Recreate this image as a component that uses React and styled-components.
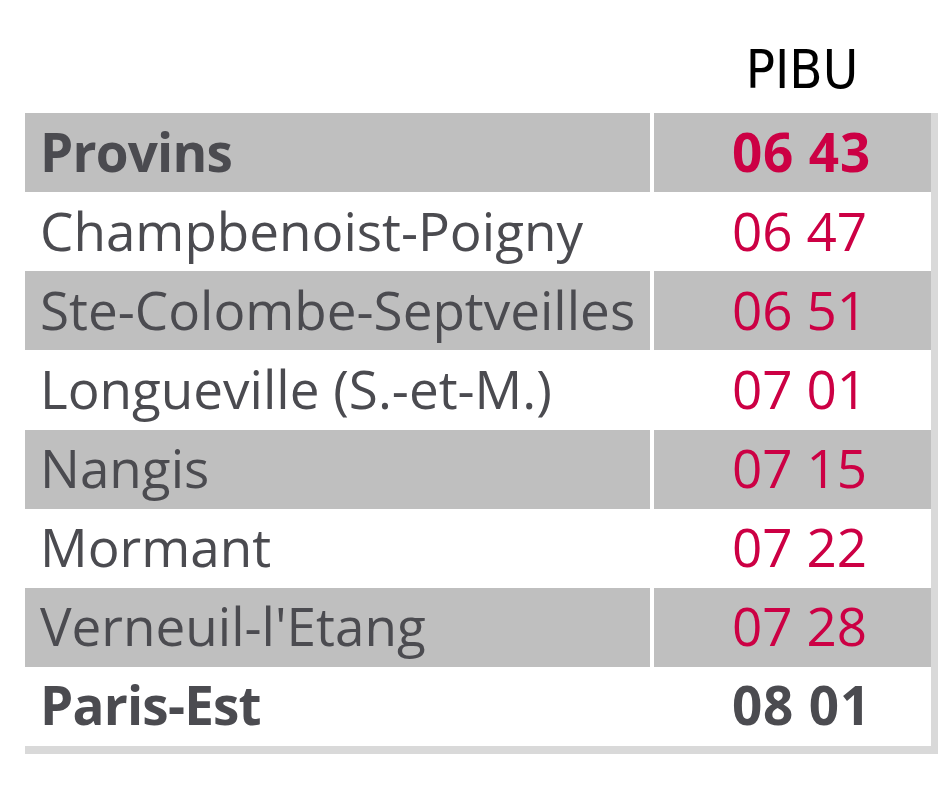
import React from "react";
import styled, { createGlobalStyle } from "styled-components";

const Global = createGlobalStyle`
  html, body { margin: 0; padding: 0; background: #ffffff; }
  body { font-family: "Open Sans", "Noto Sans", sans-serif; }
`;

const Page = styled.div`
  padding-left: 25px;
  width: 913px;
`;

const Header = styled.div`
  display: grid;
  grid-template-columns: 625px 277px;
  column-gap: 4px;
  height: 113px;
  align-items: end;
`;

const HeaderLabel = styled.div`
  grid-column: 2;
  font-family: "DejaVu Sans Condensed", "DejaVu Sans", sans-serif;
  font-size: 54px;
  color: #000;
  text-align: center;
  padding-left: 19px;
  line-height: 1;
  padding-bottom: 16px;
`;

const Table = styled.div`
  width: 906px;
  border-right: 7px solid #d9d9d9;
  border-bottom: 8px solid #d9d9d9;
`;

const Row = styled.div`
  display: grid;
  grid-template-columns: 625px 277px;
  column-gap: 4px;
  height: 79.125px;
`;

const Cell = styled.div`
  background: ${(p) => (p.$shaded ? "#bfbfbf" : "#ffffff")};
  display: flex;
  align-items: center;
  font-size: 53px;
  letter-spacing: ${(p) => (p.$bold ? "-0.8px" : "0")};
  font-weight: ${(p) => (p.$bold ? 700 : 400)};
  white-space: nowrap;
  padding-bottom: 3px;
  box-sizing: border-box;
`;

const Station = styled(Cell)`
  padding-left: 15px;
  color: #4b4b50;
`;

const Time = styled(Cell)`
  padding-left: 78px;
  letter-spacing: ${(p) => (p.$bold ? "0.8px" : "0")};
  color: ${(p) => (p.$dark ? "#4b4b50" : "#cc0044")};
`;

const rows = [
  { name: "Provins", time: "06 43", bold: true },
  { name: "Champbenoist-Poigny", time: "06 47" },
  { name: "Ste-Colombe-Septveilles", time: "06 51" },
  { name: "Longueville (S.-et-M.)", time: "07 01" },
  { name: "Nangis", time: "07 15" },
  { name: "Mormant", time: "07 22" },
  { name: "Verneuil-l'Etang", time: "07 28" },
  { name: "Paris-Est", time: "08 01", bold: true, dark: true },
];

export default function App() {
  return (
    <Page>
      <Global />
      <Header>
        <HeaderLabel>PIBU</HeaderLabel>
      </Header>
      <Table>
        {rows.map((r, i) => (
          <Row key={r.name}>
            <Station $shaded={i % 2 === 0} $bold={r.bold}>
              {r.name}
            </Station>
            <Time $shaded={i % 2 === 0} $bold={r.bold} $dark={r.dark}>
              {r.time}
            </Time>
          </Row>
        ))}
      </Table>
    </Page>
  );
}
